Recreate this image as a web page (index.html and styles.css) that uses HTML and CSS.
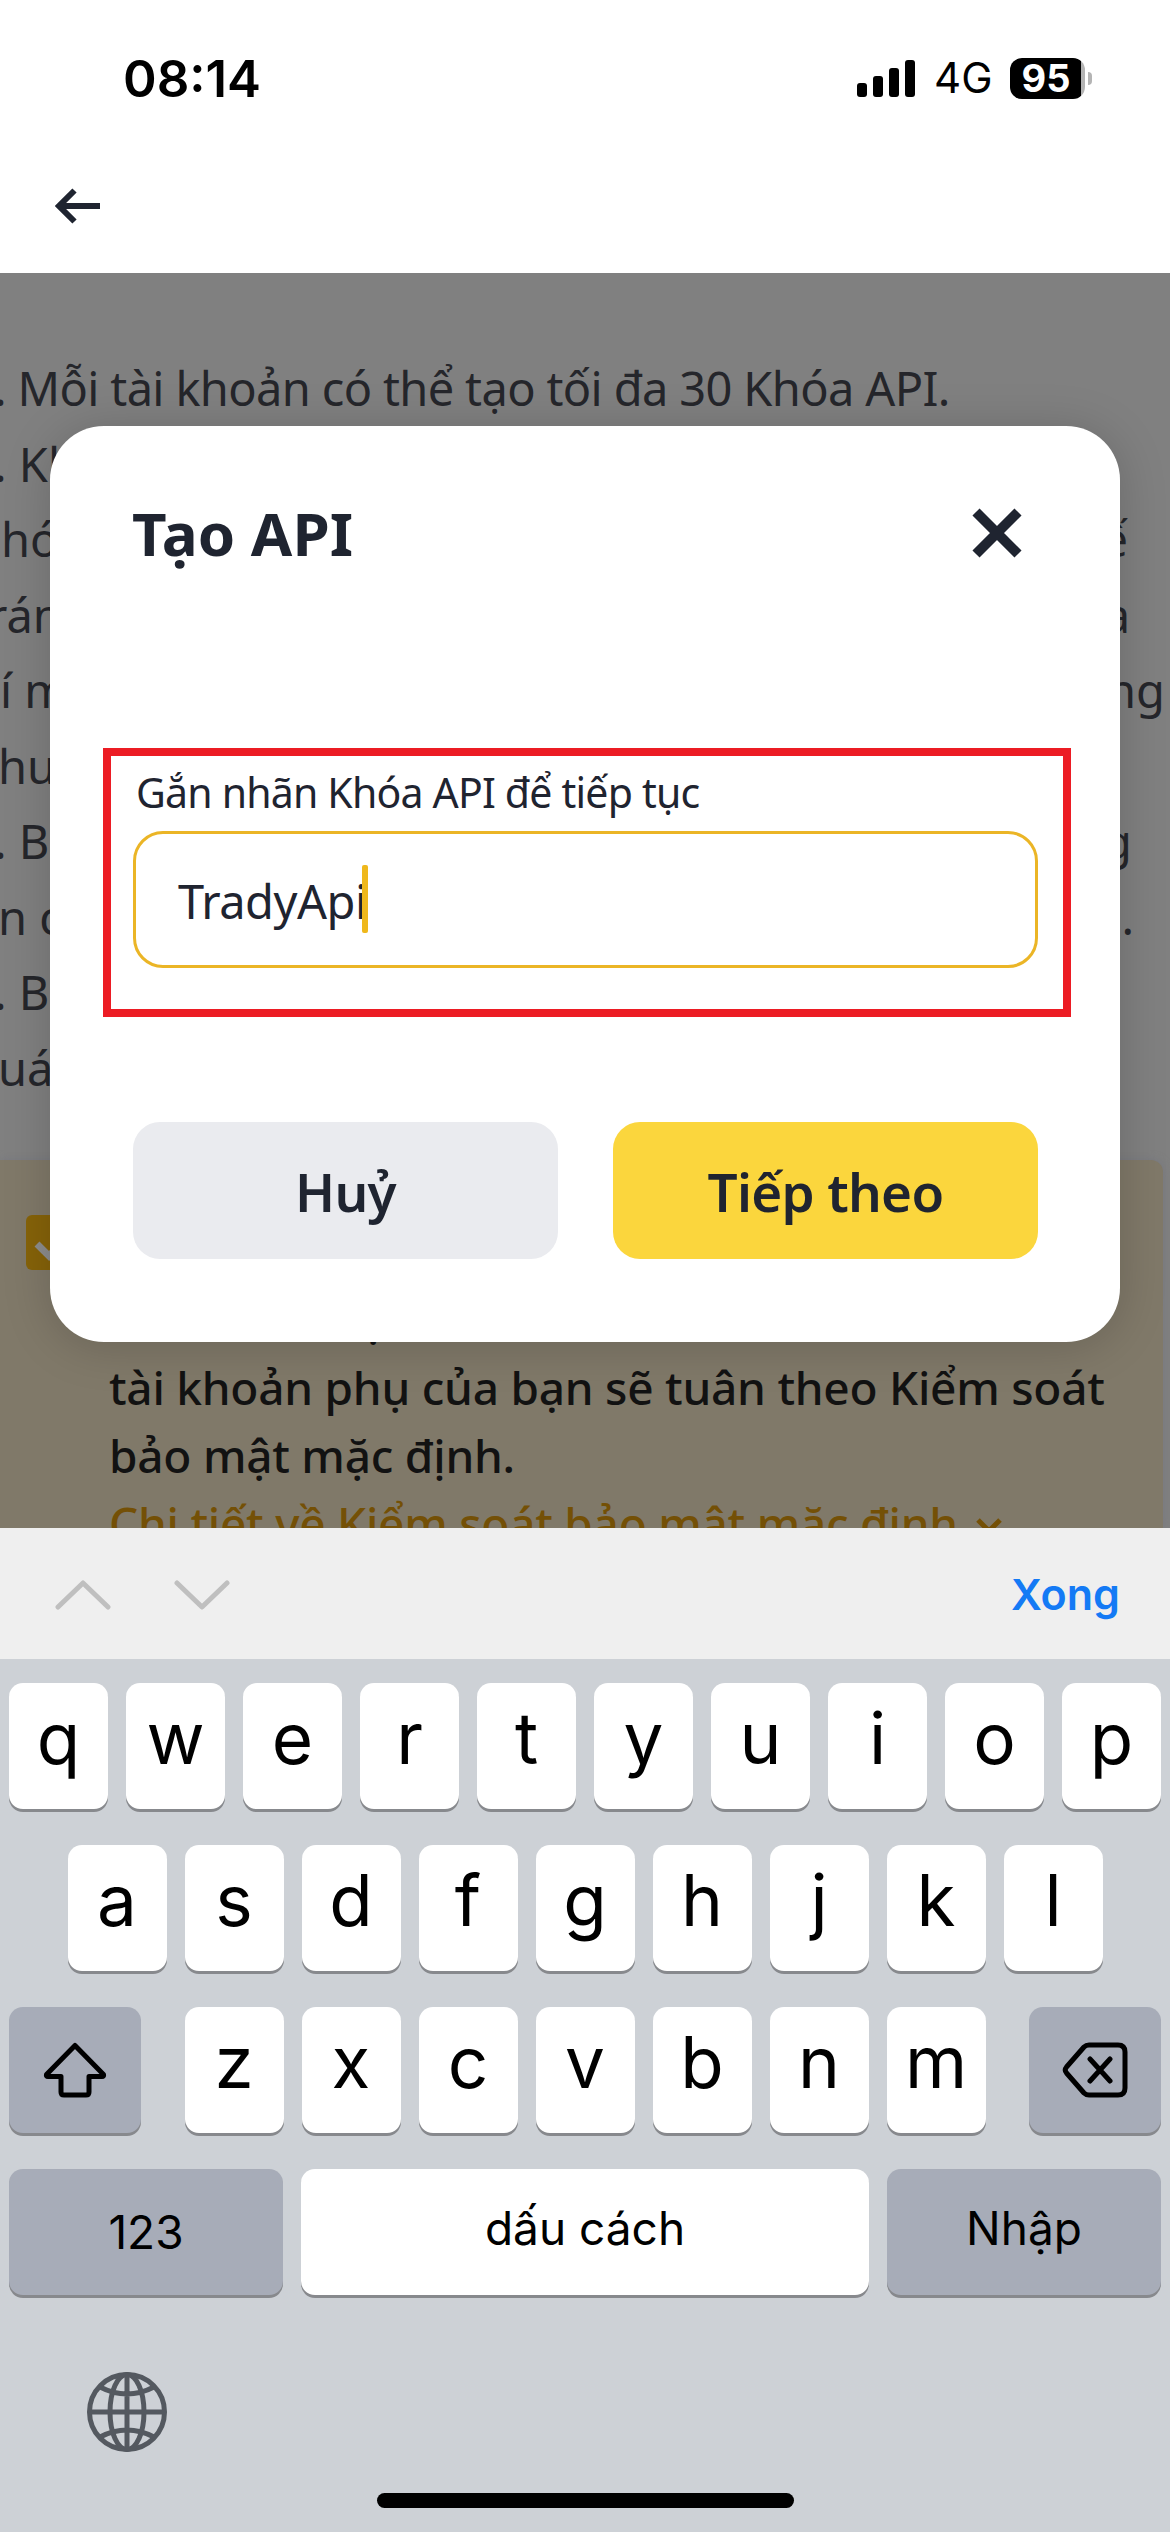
FILE: index.html
```html
<!DOCTYPE html>
<html lang="vi">
<head>
<meta charset="utf-8">
<title>Tạo API</title>
<link rel="stylesheet" href="styles.css">
</head>
<body>
<header class="top">
  <div class="status">
    <span class="time">08:14</span>
    <div class="status-right">
      <svg class="signal" viewBox="0 0 58 37"><rect x="0" y="23" width="10" height="14" rx="3"/><rect x="16" y="16" width="10" height="21" rx="3"/><rect x="32" y="8" width="10" height="29" rx="3"/><rect x="48" y="0" width="10" height="37" rx="3"/></svg>
      <span class="net">4G</span>
      <div class="battery"><span class="level">95</span><i class="nub"></i></div>
    </div>
  </div>
  <svg class="back" viewBox="0 0 46 36"><path d="M19.500 2.500L4 18L19.500 33.500M4 18H45" fill="none" stroke="#1f2430" stroke-width="6"/></svg>
</header>

<main class="page">
  <div class="notes">
    <p class="first"><span>. Mỗi tài khoản có thể tạo tối đa 30 Khóa API.</span></p>
    <p class="dot"><span>. Kh</span></p>
    <p class="in5"><span>hó</span><span class="r45">ế</span></p>
    <p class="cut"><span>rán</span><span class="r44">a</span></p>
    <p><span>í m</span><span class="r6">ng</span></p>
    <p class="in0"><span>hư</span></p>
    <p class="dot"><span>. B</span><span class="r40">g</span></p>
    <p class="in0"><span>n c</span><span class="r36">.</span></p>
    <p class="dot"><span>. B</span></p>
    <p class="in0"><span>uá</span></p>
  </div>
  <section class="notice">
    <svg class="check" viewBox="0 0 55 55"><rect width="55" height="55" rx="6" fill="#866309"/><path d="M11 29L23 41L44 18" fill="none" stroke="#8d8d8d" stroke-width="7"/></svg>
    <div class="notice-text">
      <p class="tail">ạ</p>
      <p class="l1">tài khoản phụ của bạn sẽ tuân theo Kiểm soát</p>
      <p class="l2">bảo mật mặc định.</p>
      <p class="link"><span>Chi tiết về Kiểm soát bảo mật mặc định</span><svg class="caret-down" viewBox="0 0 26 18"><path d="M2 3L13 14L24 3" fill="none" stroke="#745006" stroke-width="5"/></svg></p>
    </div>
  </section>

  <div class="modal">
    <div class="modal-head">
      <h1>Tạo API</h1>
      <svg class="close" viewBox="0 0 50 50"><path d="M4 4L46 46M46 4L4 46" fill="none" stroke="#1f2430" stroke-width="10"/></svg>
    </div>
    <div class="highlight">
      <label>Gắn nhãn Khóa API để tiếp tục</label>
      <div class="field"><span class="value">TradyApi</span><i class="caret"></i></div>
    </div>
    <div class="actions">
      <div class="btn cancel"><span>Huỷ</span></div>
      <div class="btn next"><span>Tiếp theo</span></div>
    </div>
  </div>
</main>

<div class="toolbar">
  <svg class="chev" viewBox="0 0 56 34"><path d="M3 30L28 6L53 30"/></svg>
  <svg class="chev" viewBox="0 0 56 34"><path d="M3 6L28 30L53 6"/></svg>
  <span class="done">Xong</span>
</div>
<div class="keyboard">
  <div class="row"><b>q</b><b>w</b><b>e</b><b>r</b><b>t</b><b>y</b><b>u</b><b>i</b><b>o</b><b>p</b></div>
  <div class="row"><b>a</b><b>s</b><b>d</b><b>f</b><b>g</b><b>h</b><b>j</b><b>k</b><b>l</b></div>
  <div class="row wide">
    <div class="key dark"><svg class="shift" viewBox="0 0 64 56"><path d="M32 3.500L60.500 32.500Q61 34.500 59 34.500H46V50Q46 53 43 53H21Q18 53 18 50V34.500H5Q3 34.500 3.500 32.500Z"/></svg></div>
    <div class="letters"><b>z</b><b>x</b><b>c</b><b>v</b><b>b</b><b>n</b><b>m</b></div>
    <div class="key dark"><svg class="del" viewBox="0 0 66 56"><path d="M27 3H56Q63 3 63 10V46Q63 53 56 53H27Q24 53 22 51L4.500 31Q2 28 4.500 25L22 5Q24 3 27 3ZM28 17L48 39M48 17L28 39"/></svg></div>
  </div>
  <div class="row last"><div class="key dark num">123</div><div class="key space">dấu cách</div><div class="key dark enter">Nhập</div></div>
  <svg class="globe" viewBox="0 0 80 80"><circle cx="40" cy="40" r="37.500"/><ellipse cx="40" cy="40" rx="17" ry="37.500"/><path d="M40 2V78M2 40H78M13 15Q40 29 67 15M13 65Q40 51 67 65"/></svg>
  <div class="home"></div>
</div>
</body>
</html>
```
FILE: styles.css
```css
* { box-sizing: border-box; margin: 0; padding: 0; }
body {
  width: 1170px; height: 2532px; overflow: hidden; background: #fff;
  font-family: "Noto Sans", "Open Sans", sans-serif; color: #1f2430;
}
svg { display: block; flex: none; }
span, label, h1 { white-space: nowrap; }

.top { height: 273px; }
.status {
  height: 156px; padding: 0 78px 0 123px; display: flex; align-items: center;
  justify-content: space-between; font-family: Inter, sans-serif; color: #000;
}
.time { font-size: 51px; font-weight: 600; }
.status-right { display: flex; align-items: center; }
.signal { width: 58px; height: 37px; }
.net { margin-left: 19px; width: 76px; font-size: 42px; font-weight: 400; line-height: 50px; }
.battery { display: flex; align-items: center; gap: 3px; }
.level {
  width: 75px; height: 41px; border-radius: 12px; padding-right: 3px; text-align: center;
  background: linear-gradient(90deg, #000 71px, #b4b4b4 71px);
  color: #fff; font-size: 38px; line-height: 41px; font-weight: 700;
}
.nub { width: 4px; height: 13px; border-radius: 0 6px 6px 0; background: #b4b4b4; }
.back { width: 46px; height: 36px; margin: 32px 0 0 55px; }

.page { position: relative; height: 1255px; overflow: hidden; background: #808080; }
.notes { padding-top: 78px; height: 887px; color: #25262b; font-size: 47px; line-height: 75.5px; }
.notes p { display: flex; justify-content: space-between; }
.notes .first, .notes .dot { margin-left: -6px; }
.first span { letter-spacing: -0.65px; }
.cut { margin-left: -12px; }
.in5 { margin-left: 1px; }
.in0 { margin-left: -2px; }
.r45 { margin-right: 42px; }
.r44 { margin-right: 40px; }
.r6 { margin-right: 5px; }
.r40 { margin-right: 38px; }
.r36 { margin-right: 36px; }

.notice {
  display: flex; gap: 28px; width: 1163px; height: 368px; padding-left: 26px;
  background: #807969; border-radius: 0 12px 0 0; box-shadow: 0 0 8px #77787f;
}
.check { width: 55px; height: 55px; margin-top: 55px; }
.notice-text { padding-top: 125px; font-size: 46px; line-height: 68px; font-weight: 500; color: #121212; letter-spacing: -0.25px; }
.notice-text p { white-space: nowrap; }
.tail { padding-left: 251px; }
.link { display: flex; gap: 18px; color: #745006; }
.caret-down { width: 26px; height: 18px; margin-top: 28px; }

.modal {
  position: absolute; left: 50px; top: 153px; width: 1070px; height: 916px;
  background: #fff; border-radius: 54px; box-shadow: 0 4px 48px rgba(0, 0, 0, .18);
}
.modal-head { height: 322px; padding: 66px 98px 0 82px; display: flex; justify-content: space-between; }
h1 { font-size: 60px; line-height: 82px; font-weight: 700; }
.close { width: 50px; height: 50px; margin-top: 16px; }
.highlight { width: 968px; height: 269px; margin-left: 53px; padding: 4px 25px 0 22px; border: 8px solid #ec1c24; }
label { display: block; height: 71px; padding-left: 3px; font-size: 41px; line-height: 65px; letter-spacing: -0.8px; }
.field {
  height: 137px; border: 3px solid #ebb526; border-radius: 30px; padding: 2px 0 0 42px;
  display: flex; align-items: center; font-size: 47px; letter-spacing: -0.5px;
}
.caret { width: 6px; height: 68px; margin: -4px 0 0 -5px; border-radius: 2px; background: #efb81c; }
.actions { display: flex; justify-content: space-between; padding: 105px 82px 0 83px; }
.btn { width: 425px; height: 137px; border-radius: 27px; display: flex; align-items: center; justify-content: center; padding-top: 2px; font-size: 53px; font-weight: 600; letter-spacing: -0.7px; }
.cancel { background: #eaebef; }
.next { background: #fbd63d; }

.toolbar { height: 131px; display: flex; align-items: center; gap: 63px; padding: 0 50px 0 55px; background: #efefef; }
.chev { width: 56px; height: 34px; fill: none; stroke: #bfbfbf; stroke-width: 5; stroke-linecap: round; stroke-linejoin: round; }
.done { margin-left: auto; font: 600 43px/60px Inter, sans-serif; color: #147af5; }

.keyboard {
  height: 873px; padding: 24px 9px 0; background: #cdd1d6; color: #000;
  font-family: Inter, sans-serif;
}
.row, .letters { display: flex; justify-content: center; gap: 18px; }
.row { height: 126px; margin-bottom: 36px; }
.wide, .last { justify-content: space-between; }
.keyboard b {
  width: 99px; height: 126px; border-radius: 14px; background: #fff; box-shadow: 0 3px 0 #87898d;
  text-align: center; font-size: 71px; line-height: 110px; font-weight: 400;
}
.key {
  width: 132px; height: 126px; border-radius: 14px; background: #fff; box-shadow: 0 3px 0 #87898d;
  display: flex; align-items: center; justify-content: center; font-size: 46px;
}
.dark { background: #a7acb8; }
.last .key { width: 274px; }
.last .space { width: 568px; }
.last .space, .last .enter { padding-bottom: 8px; }
.shift, .del { fill: none; stroke: #000; stroke-width: 5; stroke-linejoin: round; stroke-linecap: round; }
.shift { width: 64px; height: 56px; }
.del { width: 66px; height: 56px; }
.globe { width: 80px; height: 80px; margin: 77px 0 0 78px; fill: none; stroke: #545960; stroke-width: 5; }
.home { width: 417px; height: 15px; margin: 41px auto 0; border-radius: 8px; background: #000; }
```
